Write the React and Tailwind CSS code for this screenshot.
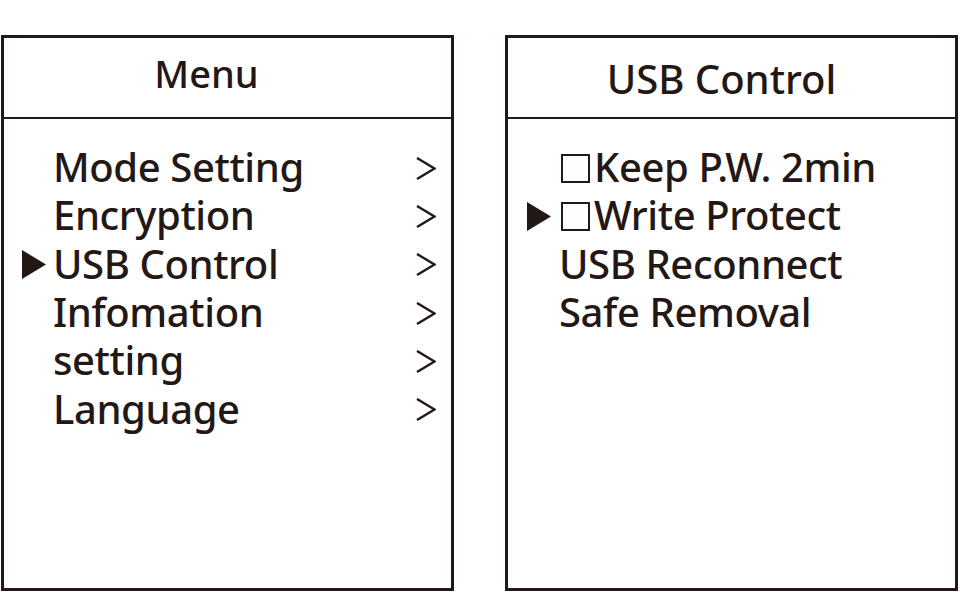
import React from 'react';

const INK = '#231815';

const menuItems = ['Mode Setting', 'Encryption', 'USB Control', 'Infomation', 'setting', 'Language'];

const usbItems = [
    { label: 'Keep P.W. 2min', box: true },
    { label: 'Write Protect', box: true, active: true },
    { label: 'USB Reconnect' },
    { label: 'Safe Removal' },
];

const Pointer = ({ show }) => (
    <span className="w-[24px] h-[29px] shrink-0 mt-[2px] flex">
        {show && (
            <svg width="24" height="29" viewBox="0 0 24 29">
                <polygon points="0,0 24,14.5 0,29" fill={INK} />
            </svg>
        )}
    </span>
);

const Chevron = () => (
    <svg width="20" height="23" viewBox="0 0 20 23" className="mt-[2px]">
        <polyline points="1,1 18.5,11.5 1,22" fill="none" stroke={INK} strokeWidth="2.4" />
    </svg>
);

const CheckBox = () => (
    <span className="inline-block w-[29px] h-[29px] border-2 border-[#231815] mt-[2px] mr-[4px] shrink-0" />
);

const Panel = ({ title, titleClass, children }) => (
    <div className="w-[453px] h-[556px] border-[3px] border-[#231815] flex flex-col">
        <div className={`h-[79px] flex justify-center ${titleClass}`}>
            <span className="leading-[38px]">{title}</span>
        </div>
        <div className="h-[2px] bg-[#231815]" />
        <div className="pt-[24px] flex flex-col">{children}</div>
    </div>
);

export default function App() {
    return (
        <div
            className="w-[960px] h-[592px] bg-white pt-[35px] pl-[1px] flex gap-[51px] text-[#231815] font-medium"
            style={{ fontFamily: '"Noto Sans", "Liberation Sans", sans-serif' }}
        >
            {/* Left: main menu */}
            <Panel title="Menu" titleClass="pt-[16px] pr-[42px] text-[38px]">
                {menuItems.map((item) => (
                    <div key={item} className="h-[48.3px] flex items-center pl-[18px] pr-[15px]">
                        <Pointer show={item === 'USB Control'} />
                        <span className="text-[40px] leading-[48px] tracking-[-0.4px] ml-[7px] flex-1">{item}</span>
                        <Chevron />
                    </div>
                ))}
            </Panel>

            {/* Right: USB control submenu */}
            <Panel title="USB Control" titleClass="pt-[22px] pr-[20px] text-[40px]">
                {usbItems.map((item) => (
                    <div key={item.label} className="h-[48.3px] flex items-center pl-[19px]">
                        <Pointer show={item.active} />
                        <span className="ml-[8px] flex items-center">
                            {item.box && <span className="ml-[2px] flex"><CheckBox /></span>}
                            <span className="text-[40px] leading-[48px] tracking-[-0.4px]">{item.label}</span>
                        </span>
                    </div>
                ))}
            </Panel>
        </div>
    );
}
